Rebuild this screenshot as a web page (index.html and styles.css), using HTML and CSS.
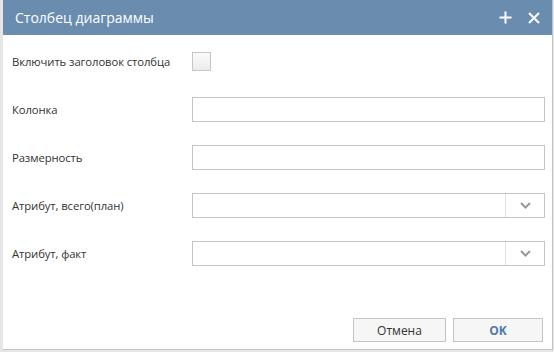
FILE: index.html
```html
<!DOCTYPE html>
<html lang="ru">

<head>
  <meta charset="UTF-8">
  <title>Столбец диаграммы</title>
  <link rel="stylesheet" href="styles.css">
</head>

<body>
  <div class="dialog">
    <div class="dialog-header">
      <span class="dialog-title">Столбец диаграммы</span>
      <span class="header-tools">
        <svg width="13" height="13" viewBox="0 0 13 13"><path d="M6.5 0.5v12M0.5 6.5h12" stroke="#fff" stroke-width="2"/></svg>
        <svg width="12" height="12" viewBox="0 0 12 12"><path d="M1 1l10 10M11 1L1 11" stroke="#fff" stroke-width="2"/></svg>
      </span>
    </div>

    <form class="dialog-body">
      <div class="row">
        <label>Включить заголовок столбца</label>
        <span class="checkbox"></span>
      </div>
      <div class="row">
        <label>Колонка</label>
        <input type="text" class="field">
      </div>
      <div class="row">
        <label>Размерность</label>
        <input type="text" class="field">
      </div>
      <div class="row">
        <label>Атрибут, всего(план)</label>
        <div class="combo">
          <span class="combo-value"></span>
          <span class="combo-btn">
            <svg width="11" height="7" viewBox="0 0 11 7"><path d="M1 1l4.5 4.5L10 1" fill="none" stroke="#999" stroke-width="2"/></svg>
          </span>
        </div>
      </div>
      <div class="row">
        <label>Атрибут, факт</label>
        <div class="combo">
          <span class="combo-value"></span>
          <span class="combo-btn">
            <svg width="11" height="7" viewBox="0 0 11 7"><path d="M1 1l4.5 4.5L10 1" fill="none" stroke="#999" stroke-width="2"/></svg>
          </span>
        </div>
      </div>
    </form>

    <div class="dialog-footer">
      <button type="button" class="btn">Отмена</button>
      <button type="button" class="btn btn-ok">OK</button>
    </div>
  </div>
</body>

</html>
```

FILE: styles.css
```css
body {
  margin: 0;
  background: #e6e6e6;
  font-family: "Open Sans", Arial, sans-serif;
  color: #333;
}

.dialog {
  margin-left: 3px;
  width: 549px;
  height: 349px;
  background: #fff;
  border-right: 1px solid #c4c4c4;
  border-bottom: 1px solid #c4c4c4;
  display: flex;
  flex-direction: column;
}

.dialog-header {
  height: 35px;
  background: #6a8caf;
  display: flex;
  align-items: center;
  justify-content: space-between;
  padding: 0 12px 0 12px;
}

.dialog-title {
  color: #fff;
  font-size: 14px;
}

.header-tools {
  display: flex;
  align-items: center;
  gap: 16px;
}

.header-tools svg {
  display: block;
}

.dialog-body {
  padding: 14px 7px 0 9px;
  display: flex;
  flex-direction: column;
  gap: 24px;
}

.row {
  display: flex;
  align-items: center;
  height: 24px;
}

.row label {
  width: 180px;
  font-size: 11.3px;
  letter-spacing: -0.1px;
}

.checkbox {
  width: 17px;
  height: 17px;
  border: 1px solid #c6c6c6;
  background: linear-gradient(#fafafa, #ececec);
}

.field {
  box-sizing: border-box;
  width: 353px;
  height: 25px;
  margin: 0;
  border: 1px solid #c4c4c4;
  padding: 0 6px;
}

.combo {
  box-sizing: border-box;
  width: 353px;
  height: 25px;
  border: 1px solid #c4c4c4;
  display: flex;
}

.combo-value {
  flex: 1;
}

.combo-btn {
  width: 38px;
  border-left: 1px solid #e2e2e2;
  display: flex;
  align-items: center;
  justify-content: center;
}

.dialog-footer {
  margin-top: auto;
  padding: 0 9px 7px 0;
  display: flex;
  justify-content: flex-end;
  gap: 7px;
}

.btn {
  width: 93px;
  height: 24px;
  border: 1px solid #c4c4c4;
  background: #f6f6f6;
  font-family: "Open Sans", Arial, sans-serif;
  font-size: 12px;
  color: #333;
  padding: 0;
}

.btn-ok {
  width: 90px;
  color: #4f7aa6;
  font-weight: bold;
}
```
